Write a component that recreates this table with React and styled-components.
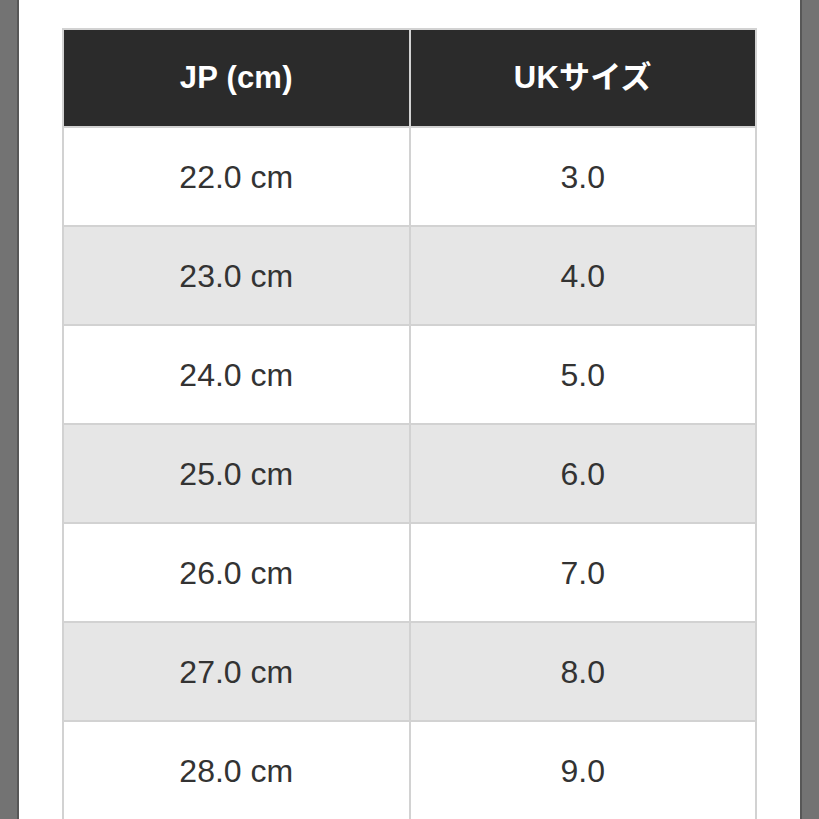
import React from "react";
import styled, { createGlobalStyle } from "styled-components";

const Global = createGlobalStyle`
  html, body { margin: 0; padding: 0; background: #ffffff; }
  body { font-family: "Liberation Sans", "Noto Sans CJK JP", sans-serif; }
`;

const Page = styled.div`
  display: flex;
  width: 819px;
  height: 819px;
  overflow: hidden;
`;

const SideStrip = styled.div`
  flex: 0 0 ${(p) => p.$w}px;
  background: #737373;
  ${(p) => (p.$side === "left" ? "border-right" : "border-left")}: 2px solid #575757;
`;

const Content = styled.div`
  flex: 1;
  background: #ffffff;
  padding: 28px 0 0 43px;
`;

const Table = styled.table`
  width: 695px;
  border-collapse: collapse;
  table-layout: fixed;
  border: 2px solid #d2d2d2;
`;

const HeadCell = styled.th`
  height: 96px;
  background: #2b2b2b;
  color: #ffffff;
  font-size: 31px;
  line-height: 36px;
  font-weight: 700;
  text-align: center;
  vertical-align: middle;
  border: 2px solid #d2d2d2;
  padding: 0;
  letter-spacing: 0.2px;
`;

const Row = styled.tr`
  background: ${(p) => (p.$shaded ? "#e6e6e6" : "#ffffff")};
`;

const Cell = styled.td`
  height: 97px;
  color: #333333;
  font-size: 32px;
  line-height: 36px;
  text-align: center;
  vertical-align: middle;
  border: 2px solid #d2d2d2;
  padding: 0;
`;

const rows = [
  ["22.0 cm", "3.0"],
  ["23.0 cm", "4.0"],
  ["24.0 cm", "5.0"],
  ["25.0 cm", "6.0"],
  ["26.0 cm", "7.0"],
  ["27.0 cm", "8.0"],
  ["28.0 cm", "9.0"],
];

export default function App() {
  return (
    <>
      <Global />
      <Page>
        <SideStrip $side="left" $w={17} />
        <Content>
          <Table>
            <thead>
              <tr>
                <HeadCell>JP (cm)</HeadCell>
                <HeadCell>UKサイズ</HeadCell>
              </tr>
            </thead>
            <tbody>
              {rows.map(([jp, uk], i) => (
                <Row key={jp} $shaded={i % 2 === 1}>
                  <Cell>{jp}</Cell>
                  <Cell>{uk}</Cell>
                </Row>
              ))}
            </tbody>
          </Table>
        </Content>
        <SideStrip $side="right" $w={17} />
      </Page>
    </>
  );
}
